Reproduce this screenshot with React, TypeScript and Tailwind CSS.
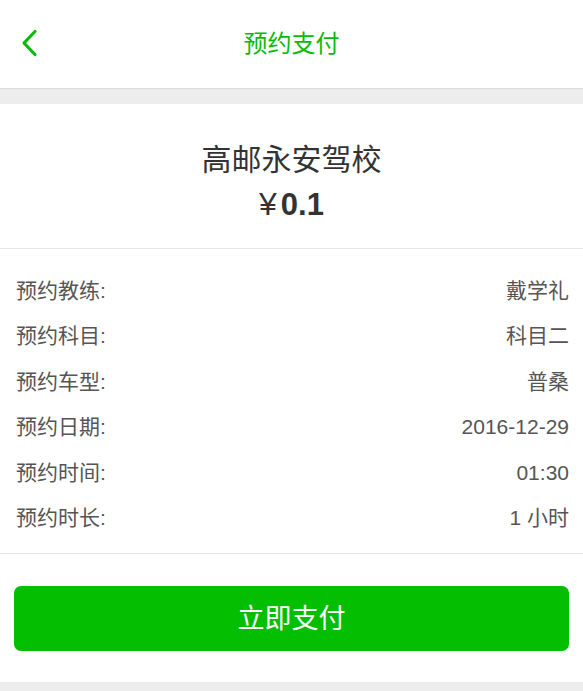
const rows = [
  { label: "预约教练:", value: "戴学礼" },
  { label: "预约科目:", value: "科目二" },
  { label: "预约车型:", value: "普桑" },
  { label: "预约日期:", value: "2016-12-29" },
  { label: "预约时间:", value: "01:30" },
  { label: "预约时长:", value: "1 小时" },
];

export default function App() {
  return (
    <div className="min-h-[691px] bg-[#ededed] font-['Liberation_Sans','Noto_Sans_CJK_SC',sans-serif]">
      {/* HEADER */}
      <header className="relative h-[89px] bg-white border-b border-[#dcdcdc] flex items-center justify-center">
        <button className="absolute left-[20px] top-[29px] w-[20px] h-[28px] flex items-center">
          <svg width="20" height="28" viewBox="0 0 20 28" fill="none">
            <path d="M15 2.5 L4 14 L15 25.5" stroke="#09bb07" strokeWidth="3.2" strokeLinecap="round" strokeLinejoin="round" />
          </svg>
        </button>
        <h1 className="text-[24px] leading-none text-[#09bb07]">预约支付</h1>
      </header>

      <div className="mt-[15px] bg-white">
        {/* SCHOOL + PRICE */}
        <div className="flex flex-col items-center pt-[38px] pb-[25px] border-b border-[#e5e5e5]">
          <div className="text-[30px] leading-[36px] text-[#333]">高邮永安驾校</div>
          <div className="mt-[8px] leading-[36px] text-[#333] flex items-baseline">
            <span className="text-[32px] mr-[4px]">¥</span>
            <span className="text-[31px] font-bold">0.1</span>
          </div>
        </div>

        {/* DETAILS */}
        <div className="pt-[19px] pb-[13px] pl-[16px] pr-[14px] border-b border-[#e5e5e5] text-[#555] text-[21px]">
          {rows.map((r) => (
            <div key={r.label} className="h-[45.4px] flex items-center justify-between">
              <span>{r.label}</span>
              <span>{r.value}</span>
            </div>
          ))}
        </div>

        {/* PAY BUTTON */}
        <div className="px-[14px] pt-[32px] pb-[31px]">
          <button className="w-full h-[65px] rounded-[7px] bg-[#04be02] text-white text-[27px]">
            立即支付
          </button>
        </div>
      </div>
    </div>
  );
}
